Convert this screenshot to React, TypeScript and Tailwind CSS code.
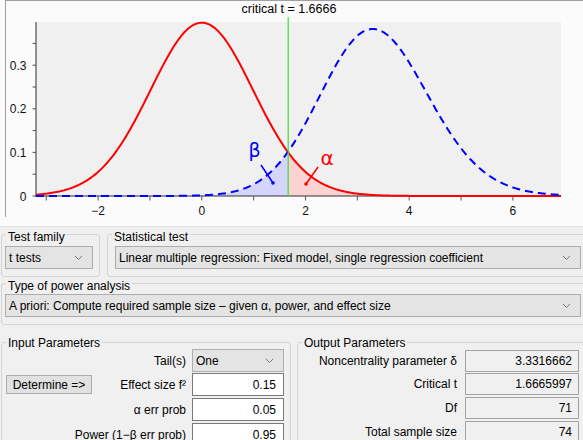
import React, { useMemo } from "react";

const NU = 71;
const DELTA = 3.3316662;
const TCRIT = 1.6665997;
const X = (t: number) => 201.8 + 51.85 * t;
const Y = (p: number) => 196 - 436 * p;
const T0 = (36 - 201.8) / 51.85;
const T1 = (561 - 201.8) / 51.85;

function makeDensity(delta: number) {
  const ss: number[] = [];
  const lw: number[] = [];
  for (let s = 0.5; s <= 1.7; s += 0.002) {
    ss.push(s);
    lw.push((NU - 1) * Math.log(s) - (NU * s * s) / 2);
  }
  const mx = Math.max(...lw);
  const w = lw.map((v) => Math.exp(v - mx));
  const sum = w.reduce((a, b) => a + b, 0);
  return (t: number) => {
    let acc = 0;
    for (let i = 0; i < ss.length; i++) {
      const z = t * ss[i] - delta;
      acc += w[i] * ss[i] * Math.exp((-z * z) / 2);
    }
    return acc / sum / Math.sqrt(2 * Math.PI);
  };
}

function Chart() {
  const d = useMemo(() => {
    const f0 = makeDensity(0);
    const f1 = makeDensity(DELTA);
    const N = 360;
    const pts0: [number, number][] = [];
    const pts1: [number, number][] = [];
    for (let i = 0; i <= N; i++) {
      const t = T0 + ((T1 - T0) * i) / N;
      pts0.push([t, f0(t)]);
      pts1.push([t, f1(t)]);
    }
    const path = (p: [number, number][]) =>
      p.map(([t, v], i) => `${i ? "L" : "M"}${X(t).toFixed(2)},${Y(v).toFixed(2)}`).join(" ");
    const left1 = pts1.filter(([t]) => t <= TCRIT);
    left1.push([TCRIT, f1(TCRIT)]);
    const right0: [number, number][] = [[TCRIT, f0(TCRIT)], ...pts0.filter(([t]) => t >= TCRIT)];
    const area = (p: [number, number][]) =>
      `M${X(p[0][0]).toFixed(2)},196 ` +
      p.map(([t, v]) => `L${X(t).toFixed(2)},${Y(v).toFixed(2)}`).join(" ") +
      ` L${X(p[p.length - 1][0]).toFixed(2)},196 Z`;
    return {
      red: path(pts0),
      blue: path(pts1),
      blueArea: area(left1),
      redArea: area(right0),
    };
  }, []);
  const xc = X(TCRIT);
  const yTicks = [0, 0.05, 0.1, 0.15, 0.2, 0.25, 0.3, 0.35];
  const xTicks = [-3, -2, -1, 0, 1, 2, 3, 4, 5, 6];
  return (
    <svg width={577} height={216} viewBox="6 1 577 216" style={{ display: "block" }}>
      <rect x={36} y={22} width={525} height={174} fill="#f0f0f0" />
      <path d={d.blueArea} fill="#d5d5fb" />
      <path d={d.redArea} fill="#fcd2d2" />
      <line x1={36} y1={22} x2={36} y2={196} stroke="#666" strokeWidth={1.4} />
      <line x1={35} y1={196} x2={561} y2={196} stroke="#333" strokeWidth={1.2} />
      {yTicks.map((v) => (
        <line key={v} x1={32.5} x2={36} y1={Y(v)} y2={Y(v)} stroke="#555" strokeWidth={1} />
      ))}
      {xTicks.map((k) => (
        <line key={k} x1={X(k)} x2={X(k)} y1={196} y2={200.5} stroke="#555" strokeWidth={1} />
      ))}
      {[
        [0, "0"],
        [0.1, "0.1"],
        [0.2, "0.2"],
        [0.3, "0.3"],
      ].map(([v, s]) => (
        <text key={s as string} x={26.5} y={Y(v as number) + 4.5} textAnchor="end" fontSize={12} fill="#111" fontFamily="'Liberation Sans', sans-serif">
          {s}
        </text>
      ))}
      {[
        [-2, "\u22122"],
        [0, "0"],
        [2, "2"],
        [4, "4"],
        [6, "6"],
      ].map(([v, s]) => (
        <text key={s as string} x={X(v as number)} y={214.5} textAnchor="middle" fontSize={12} fill="#111" fontFamily="'Liberation Sans', sans-serif">
          {s}
        </text>
      ))}
      <path d={d.red} fill="none" stroke="#ff0000" strokeWidth={2} strokeLinejoin="round" />
      <path d={d.blue} fill="none" stroke="#0000ff" strokeWidth={2} strokeDasharray="8 5" />
      <line x1={xc} x2={xc} y1={17} y2={196} stroke="#44e044" strokeWidth={1.3} />
      <text x={289} y={13} textAnchor="middle" fontSize={12.5} fill="#000" fontFamily="'Liberation Sans', sans-serif">
        critical t = 1.6666
      </text>
      <text x={248.5} y={157} fontSize={19} fill="#0000ff" fontFamily="'DejaVu Sans', sans-serif">
        β
      </text>
      <line x1={261} y1={165} x2={273} y2={183} stroke="#0000ff" strokeWidth={1.5} />
      <circle cx={273} cy={183} r={1.8} fill="#0000ff" />
      <text x={320.5} y={165} fontSize={20} fill="#ff0000" fontFamily="'DejaVu Sans', sans-serif">
        α
      </text>
      <line x1={318} y1={167} x2={306} y2={184} stroke="#ff0000" strokeWidth={1.5} />
      <circle cx={306} cy={184} r={1.8} fill="#ff0000" />
    </svg>
  );
}

function Chevron() {
  return (
    <svg width={9} height={6} viewBox="0 0 9 6" className="shrink-0">
      <polyline points="0.8,0.8 4.5,4.5 8.2,0.8" fill="none" stroke="#7a7a7a" strokeWidth={1} />
    </svg>
  );
}

function Combo({ text, className }: { text: string; className: string }) {
  return (
    <div className={`flex items-center justify-between border border-[#adadad] bg-[#e4e4e4] pl-[3px] pr-[9px] ${className}`}>
      <span className="whitespace-nowrap">{text}</span>
      <Chevron />
    </div>
  );
}

function Field({ value, className }: { value: string; className: string }) {
  return (
    <div className={`flex items-center justify-end border border-[#7a7a7a] bg-white pr-[7px] ${className}`}>
      {value}
    </div>
  );
}

function OutBox({ value }: { value: string }) {
  return (
    <div className="flex h-[22px] w-[114px] items-center justify-end border border-[#a3a3a3] bg-[#f0f0f0] pr-[6px]">
      {value}
    </div>
  );
}

const fs = "border border-[#d5d5d5] rounded-[3px] min-w-0";
const lg = "ml-[4px] px-[2px] pt-[5px] leading-[8px]";
const lg3 = "ml-[4px] px-[2px] pt-[1px] leading-[8px]";

export default function App() {
  const inputs: { label: string; node: React.ReactNode; button?: boolean; mt: string }[] = [
    { label: "Tail(s)", node: <Combo text="One" className="h-[23px] w-[92px]" />, mt: "mt-0" },
    { label: "Effect size f²", node: <Field value="0.15" className="h-[23px] w-[92px]" />, button: true, mt: "mt-[1px]" },
    { label: "α err prob", node: <Field value="0.05" className="h-[23px] w-[92px]" />, mt: "mt-[2px]" },
    { label: "Power (1−β err prob)", node: <Field value="0.95" className="h-[23px] w-[92px]" />, mt: "mt-[2px]" },
  ];
  const outputs: [string, string, string][] = [
    ["Noncentrality parameter δ", "3.3316662", "mt-0"],
    ["Critical t", "1.6665997", "mt-[1px]"],
    ["Df", "71", "mt-[2px]"],
    ["Total sample size", "74", "mt-[2px]"],
  ];
  return (
    <div className="h-[440px] w-[583px] overflow-hidden bg-[#f0f0f0] font-['Liberation_Sans',Arial,sans-serif] text-[12px] text-black">
      <div className="h-[227px] border-b border-[#e0e0e0] bg-[#fbfbfb] pl-[5px]">
        <div className="h-[217px] overflow-hidden border-l border-t border-[#a0a0a0]">
          <Chart />
        </div>
      </div>
      <div className="w-[588px] pl-[1px]">
        <div className="mt-[1px] flex gap-[7px]">
          <fieldset className={`${fs} w-[99px]`}>
            <legend className={lg}>Test family</legend>
            <div className="pl-[3px] pt-[5px] pb-[7px]">
              <Combo text="t tests" className="h-[23px] w-[88px]" />
            </div>
          </fieldset>
          <fieldset className={`${fs} flex-1`}>
            <legend className={lg}>Statistical test</legend>
            <div className="pl-[7px] pt-[5px] pb-[7px]">
              <Combo text="Linear multiple regression: Fixed model, single regression coefficient" className="h-[23px] w-[466px]" />
            </div>
          </fieldset>
        </div>
        <fieldset className={fs}>
          <legend className={lg}>Type of power analysis</legend>
          <div className="pl-[3px] pt-[4px] pb-[7px]">
            <Combo text="A priori: Compute required sample size – given α, power, and effect size" className="h-[23px] w-[576px]" />
          </div>
        </fieldset>
        <div className="mt-[13px] flex gap-[6px]">
          <fieldset className={`${fs} w-[290px] shrink-0`}>
            <legend className={lg3}>Input Parameters</legend>
            <div className="flex flex-col pl-[4px] pr-[6px] pt-[2px]">
              {inputs.map((r) => (
                <div key={r.label} className={`flex h-[23px] items-center ${r.mt}`}>
                  {r.button && (
                    <div className="flex h-[19px] w-[86px] shrink-0 items-center justify-center border border-[#adadad] bg-[#e1e1e1]">
                      Determine =&gt;
                    </div>
                  )}
                  <div className="flex-1 whitespace-nowrap pr-[6px] text-right">{r.label}</div>
                  {r.node}
                </div>
              ))}
            </div>
          </fieldset>
          <fieldset className={`${fs} flex-1`}>
            <legend className={lg3}>Output Parameters</legend>
            <div className="flex flex-col pr-[8px] pt-[3px]">
              {outputs.map(([l, v, mt]) => (
                <div key={l} className={`flex h-[22px] items-center ${mt}`}>
                  <div className="flex-1 whitespace-nowrap pr-[8px] text-right">{l}</div>
                  <OutBox value={v} />
                </div>
              ))}
            </div>
          </fieldset>
        </div>
      </div>
    </div>
  );
}
